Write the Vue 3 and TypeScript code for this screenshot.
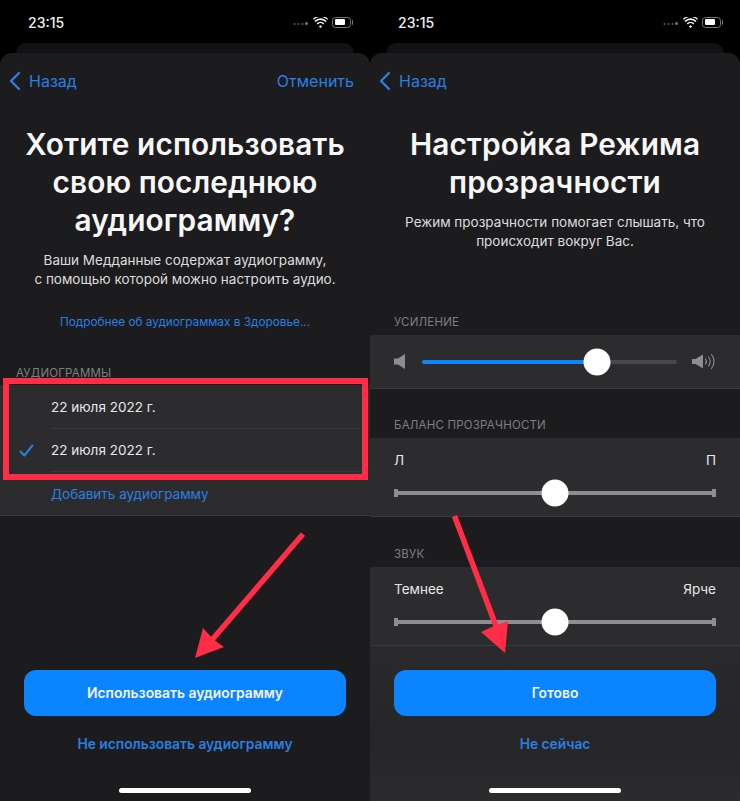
<script setup lang="ts">
const dates: { text: string; checked: boolean }[] = [
  { text: '22 июля 2022 г.', checked: false },
  { text: '22 июля 2022 г.', checked: true },
]
</script>

<template>
  <div class="page">
    <section class="phone">
      <div class="status">
        <span class="time">23:15</span>
        <div class="indicators">
          <svg width="16" height="7" viewBox="0 0 16 7"><g fill="#5c5c5e"><circle cx="1.5" cy="5" r="1"/><circle cx="5.5" cy="5" r="1"/><circle cx="9.5" cy="5" r="1"/><circle cx="13.5" cy="4.5" r="1.5" fill="#77777a"/></g></svg>
          <svg class="wifi" width="15" height="11" viewBox="0 0 15 11"><path d="M7.5 8.2l1.6 1.4-1.6 1.4-1.6-1.4zM3.7 6.2a5.4 5.4 0 0 1 7.6 0l-1.1 1.2a3.8 3.8 0 0 0-5.4 0zM1.4 3.9a8.6 8.6 0 0 1 12.2 0l-1.1 1.2a7 7 0 0 0-10 0zM0 1.9a10.6 10.6 0 0 1 15 0l-.7.9a9.4 9.4 0 0 0-13.6 0z" fill="#fff"/></svg>
          <div class="battery"><i class="level"></i></div>
        </div>
      </div>
      <div class="back-sheet"></div>
      <div class="sheet">
        <nav class="nav">
          <span class="back">
            <svg width="13" height="20" viewBox="0 0 13 20"><path d="M11 2L3 10l8 8" fill="none" stroke="#2a7fe0" stroke-width="2.4" stroke-linecap="round" stroke-linejoin="round"/></svg>
            Назад
          </span>
          <span class="cancel">Отменить</span>
        </nav>
        <h1 class="title">Хотите использовать<br>свою последнюю<br>аудиограмму?</h1>
        <p class="desc">Ваши Медданные содержат аудиограмму,<br>с помощью которой можно настроить аудио.</p>
        <p class="more">Подробнее об аудиограммах в Здоровье...</p>
        <div class="section-label first-label">АУДИОГРАММЫ</div>
        <div class="list">
          <div v-for="(d, i) in dates" :key="i" class="list-row">
            <svg v-if="d.checked" class="check" width="15" height="13" viewBox="0 0 15 13"><path d="M1.5 7.5l3.8 4L13.5 1.5" fill="none" stroke="#2a7fe0" stroke-width="2" stroke-linecap="round" stroke-linejoin="round"/></svg>
            <div class="list-text">{{ d.text }}</div>
          </div>
          <div class="list-row last"><div class="list-text add">Добавить аудиограмму</div></div>
        </div>
        <div class="actions">
          <button class="primary">Использовать аудиограмму</button>
          <div class="secondary">Не использовать аудиограмму</div>
          <div class="home"></div>
        </div>
      </div>
      <div class="highlight"></div>
      <svg class="arrow" width="370" height="801" viewBox="0 0 370 801"><path d="M303 534L211 641" stroke="#ff2d46" stroke-width="5.5" fill="none"/><path d="M195 658L203 628 213 639 224 647z" fill="#ff2d46"/></svg>
    </section>

    <section class="phone">
      <div class="status">
        <span class="time">23:15</span>
        <div class="indicators">
          <svg width="16" height="7" viewBox="0 0 16 7"><g fill="#5c5c5e"><circle cx="1.5" cy="5" r="1"/><circle cx="5.5" cy="5" r="1"/><circle cx="9.5" cy="5" r="1"/><circle cx="13.5" cy="4.5" r="1.5" fill="#77777a"/></g></svg>
          <svg class="wifi" width="15" height="11" viewBox="0 0 15 11"><path d="M7.5 8.2l1.6 1.4-1.6 1.4-1.6-1.4zM3.7 6.2a5.4 5.4 0 0 1 7.6 0l-1.1 1.2a3.8 3.8 0 0 0-5.4 0zM1.4 3.9a8.6 8.6 0 0 1 12.2 0l-1.1 1.2a7 7 0 0 0-10 0zM0 1.9a10.6 10.6 0 0 1 15 0l-.7.9a9.4 9.4 0 0 0-13.6 0z" fill="#fff"/></svg>
          <div class="battery"><i class="level"></i></div>
        </div>
      </div>
      <div class="back-sheet"></div>
      <div class="sheet">
        <nav class="nav">
          <span class="back">
            <svg width="13" height="20" viewBox="0 0 13 20"><path d="M11 2L3 10l8 8" fill="none" stroke="#2a7fe0" stroke-width="2.4" stroke-linecap="round" stroke-linejoin="round"/></svg>
            Назад
          </span>
        </nav>
        <h1 class="title">Настройка Режима<br>прозрачности</h1>
        <p class="desc">Режим прозрачности помогает слышать, что<br>происходит вокруг Вас.</p>
        <div class="section-label gain-label">УСИЛЕНИЕ</div>
        <div class="control gain">
          <svg width="11" height="15" viewBox="0 0 11 15"><path d="M0 4.5h4L11 0v15L4 10.5H0z" fill="#8e8e90"/></svg>
          <div class="gain-track">
            <div class="gain-fill"></div>
            <div class="thumb gain-thumb"></div>
          </div>
          <svg width="24" height="17" viewBox="0 0 24 17"><path d="M0 6h3.5L11 1.5v14L3.5 11H0z" fill="#8e8e90"/><g fill="none" stroke="#8e8e90" stroke-width="1.1" stroke-linecap="round"><path d="M13.5 6a4 4 0 0 1 0 5"/><path d="M16.5 4a7 7 0 0 1 0 9"/><path d="M19.5 1.5a11 11 0 0 1 0 14"/></g></svg>
        </div>
        <div class="section-label balance-label">БАЛАНС ПРОЗРАЧНОСТИ</div>
        <div class="control stacked">
          <div class="ends"><span>Л</span><span>П</span></div>
          <div class="track"><div class="thumb"></div></div>
        </div>
        <div class="section-label sound-label">ЗВУК</div>
        <div class="control stacked sound">
          <div class="ends"><span>Темнее</span><span>Ярче</span></div>
          <div class="track"><div class="thumb"></div></div>
        </div>
        <div class="actions lifted">
          <button class="primary">Готово</button>
          <div class="secondary">Не сейчас</div>
          <div class="home"></div>
        </div>
      </div>
      <svg class="arrow" width="370" height="801" viewBox="0 0 370 801"><path d="M84.5 516L126 626" stroke="#ff2d46" stroke-width="5.5" fill="none"/><path d="M135 653L111 632 124 626 138 621z" fill="#ff2d46"/></svg>
    </section>
  </div>
</template>

<style scoped>
.page {
  display: flex;
  width: 740px;
  height: 801px;
  overflow: hidden;
  background: #000;
  font-family: Inter, "Liberation Sans", sans-serif;
  color: #f2f2f4;
}
.phone {
  position: relative;
  display: flex;
  flex-direction: column;
  width: 370px;
  height: 801px;
}
.status {
  display: flex;
  flex: none;
  justify-content: space-between;
  align-items: center;
  height: 43px;
  padding: 1px 19px 0 28px;
  box-sizing: border-box;
}
.time {
  font-size: 14px;
  font-weight: 500;
  color: #f0f0f0;
}
.indicators {
  display: flex;
  align-items: center;
  gap: 4px;
}
.battery {
  position: relative;
  width: 19px;
  height: 11px;
  padding: 1.5px;
  box-sizing: border-box;
  border: 1px solid #77777a;
  border-radius: 3.5px;
}
.battery::after {
  content: "";
  position: absolute;
  right: -3px;
  top: 2px;
  width: 1.5px;
  height: 5px;
  background: #77777a;
  border-radius: 0 1px 1px 0;
}
.level {
  display: block;
  width: 10px;
  height: 100%;
  background: #fff;
  border-radius: 1px;
}
.back-sheet {
  flex: none;
  height: 10px;
  margin: 0 16px;
  background: #121214;
  border-radius: 10px 10px 0 0;
}
.sheet {
  display: flex;
  flex: 1;
  flex-direction: column;
  min-height: 0;
  background: #1c1c1e;
  border-radius: 12px 12px 0 0;
}
.nav {
  display: flex;
  flex: none;
  justify-content: space-between;
  align-items: center;
  height: 56px;
  padding: 0 16px 0 8px;
  box-sizing: border-box;
  font-size: 16px;
  color: #2a7fe0;
}
.back {
  display: flex;
  align-items: center;
  gap: 8px;
}
.title {
  margin: 16px 0 0;
  font-size: 29.8px;
  font-weight: 600;
  line-height: 38px;
  letter-spacing: 0.1px;
  text-align: center;
  color: #f7f7f7;
}
.desc {
  margin: 12px 0 0;
  font-size: 13.5px;
  line-height: 19px;
  text-align: center;
  color: #dcdcde;
}
.more {
  margin: 24px 0 0;
  font-size: 11.8px;
  line-height: 18px;
  text-align: center;
  color: #2a7fe0;
}
.section-label {
  flex: none;
  padding-left: 24px;
  font-size: 11.5px;
  line-height: 13px;
  letter-spacing: 0.2px;
  color: #7f7f83;
}
.first-label {
  margin-top: 35px;
  padding-left: 16px;
  line-height: 14px;
}
.gain-label {
  margin-top: 64.5px;
}
.balance-label {
  margin-top: 29.5px;
}
.sound-label {
  margin-top: 30.5px;
}
.list {
  margin-top: 5px;
  background: #2c2c2e;
  border-bottom: 1px solid #3a3a3c;
}
.list-row {
  position: relative;
  display: flex;
  align-items: stretch;
  height: 43.5px;
  padding-left: 51px;
}
.list-row.last {
  height: 43px;
}
.list-text {
  flex: 1;
  display: flex;
  align-items: center;
  padding-top: 1px;
  box-sizing: border-box;
  border-bottom: 1px solid #38383a;
  font-size: 13.5px;
  color: #e8e8ea;
}
.last .list-text {
  padding-top: 0;
  border-bottom: 0;
}
.add {
  color: #2a7fe0;
}
.check {
  position: absolute;
  left: 19px;
  top: 15px;
}
.control {
  flex: none;
  margin-top: 6.5px;
  padding: 0 24px;
  box-sizing: border-box;
  background: #2c2c2e;
  border-bottom: 1px solid #3a3a3c;
}
.gain {
  display: flex;
  align-items: center;
  justify-content: space-between;
  height: 54px;
}
.gain-track {
  position: relative;
  width: 255px;
  height: 4px;
  margin-left: 1px;
  background: #48484a;
  border-radius: 2px;
}
.gain-fill {
  width: 175px;
  height: 100%;
  background: #0a84ff;
  border-radius: 2px;
}
.thumb {
  position: absolute;
  top: 50%;
  left: 50%;
  width: 27px;
  height: 27px;
  transform: translate(-50%, -50%);
  border-radius: 50%;
  background: #fff;
}
.gain-thumb {
  left: 175px;
}
.stacked {
  height: 79px;
  padding-top: 13px;
}
.ends {
  display: flex;
  justify-content: space-between;
  font-size: 13.5px;
  line-height: 18px;
  color: #e8e8ea;
}
.track {
  position: relative;
  height: 4px;
  margin-top: 22px;
  background: #8e8e90;
}
.track::before,
.track::after {
  content: "";
  position: absolute;
  top: -2px;
  width: 4px;
  height: 8px;
  background: #8e8e90;
}
.track::before {
  left: 0;
}
.track::after {
  right: 0;
}
.actions {
  flex: 1;
  display: flex;
  flex-direction: column;
  align-items: center;
  justify-content: flex-end;
  padding: 0 24px 8px;
}
.lifted {
  background: linear-gradient(180deg, #2a2a2c, #262628 60%, #2b2b2d);
}
.primary {
  width: 322px;
  height: 46px;
  border: 0;
  border-radius: 12px;
  background: #0a84ff;
  color: #f5f5f7;
  font-family: inherit;
  font-size: 13.85px;
  font-weight: 600;
}
.secondary {
  margin-top: 19px;
  font-size: 13.8px;
  font-weight: 600;
  line-height: 18px;
  color: #2a7fe0;
}
.home {
  width: 132px;
  height: 5px;
  margin-top: 35px;
  background: #fff;
  border-radius: 3px;
}
.highlight {
  position: absolute;
  left: 3px;
  top: 378px;
  width: 365px;
  height: 102px;
  box-sizing: border-box;
  border: 6px solid #ff2d46;
}
.arrow {
  position: absolute;
  left: 0;
  top: 0;
  pointer-events: none;
}
</style>
